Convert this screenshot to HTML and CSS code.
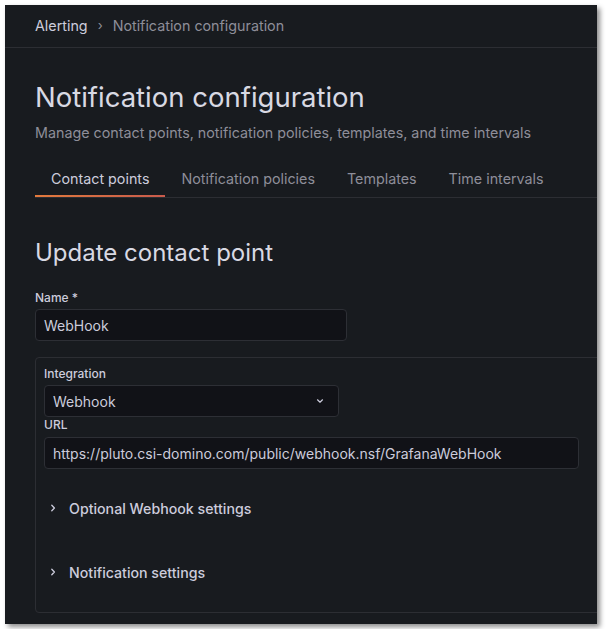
FILE: index.html
```html
<!DOCTYPE html>
<html>
<head>
  <title>Notification configuration</title>
  <meta name="viewport" content="width=device-width, initial-scale=1.0">
  <link rel="stylesheet" href="styles.css">
</head>
<body>

  <div class="app">
    <nav class="crumbs">
      <span class="crumb-root">Alerting</span>
      <span class="crumb-sep">›</span>
      <span class="crumb-current">Notification configuration</span>
    </nav>

    <main class="page">
      <h1 class="title">Notification configuration</h1>
      <p class="subtitle">Manage contact points, notification policies, templates, and time intervals</p>

      <div class="tabs">
        <a class="tab active">Contact points</a>
        <a class="tab">Notification policies</a>
        <a class="tab">Templates</a>
        <a class="tab">Time intervals</a>
      </div>

      <h2 class="section-title">Update contact point</h2>

      <label class="field-label">Name *</label>
      <div class="input name-input">WebHook</div>

      <div class="integration">
        <label class="field-label">Integration</label>
        <div class="input select">
          <span>Webhook</span>
          <svg class="select-arrow" width="12" height="12" viewBox="0 0 12 12"><path d="M3.5 4.8 L6 7.2 L8.5 4.8" fill="none" stroke="#ccccdc" stroke-width="1.2" stroke-linecap="round" stroke-linejoin="round"/></svg>
        </div>
        <label class="field-label url-label">URL</label>
        <div class="input url-input">https://pluto.csi-domino.com/public/webhook.nsf/GrafanaWebHook</div>

        <div class="collapse">
          <svg width="16" height="16" viewBox="0 0 16 16"><path d="M6.8 5.2 L9.4 8 L6.8 10.8" fill="none" stroke="#ccccdc" stroke-width="1.3" stroke-linecap="round" stroke-linejoin="round"/></svg>
          <span>Optional Webhook settings</span>
        </div>
        <div class="collapse">
          <svg width="16" height="16" viewBox="0 0 16 16"><path d="M6.8 5.2 L9.4 8 L6.8 10.8" fill="none" stroke="#ccccdc" stroke-width="1.3" stroke-linecap="round" stroke-linejoin="round"/></svg>
          <span>Notification settings</span>
        </div>
      </div>
    </main>
  </div>

</body>
</html>
```

FILE: styles.css
```css
body { margin: 0; background: #fff; font-family: Inter, "Noto Sans", sans-serif; color: #ccccdc; }

.app {
  margin: 5px;
  width: 592px; height: 619px;
  background: #181b1f;
  overflow: hidden;
  box-shadow: 3px 3px 5px rgba(0, 0, 0, 0.45);
}

.crumbs {
  padding: 0 0 2px 30px;
  box-sizing: border-box;
  height: 43px;
  border-bottom: 1px solid #2c2e33;
  display: flex; align-items: center;
  font-size: 14.3px;
}
.crumb-root { color: #ccccdc; }
.crumb-sep { color: #8e8e99; margin: 0 10px 0 10px; font-size: 13px; }
.crumb-current { color: #8e8e99; }

.page { padding-left: 30px; width: 800px; }

.title {
  margin: 32px 0 0;
  font-size: 27.5px; line-height: 34px; font-weight: 400;
  color: #d8d9e3;
}
.subtitle {
  margin: 9px 0 0;
  font-size: 14.3px; line-height: 20px;
  color: #8e8e99;
}

.tabs {
  margin-top: 16px;
  display: flex;
  border-bottom: 1px solid #2c2e33;
}
.tab {
  position: relative;
  padding: 10px 16px 8px;
  font-size: 14.3px; line-height: 20px;
  color: #8e8e99;
}
.tab.active { color: #ccccdc; }
.tab.active::after {
  content: "";
  position: absolute; left: 0; right: 0; bottom: 0;
  height: 2px;
  background: linear-gradient(90deg, #e27a3d, #c95b4c);
}

.section-title {
  margin: 41px 0 0;
  font-size: 24px; line-height: 28px; font-weight: 400;
  color: #d8d9e3;
}

.field-label {
  display: block;
  font-size: 12px; line-height: 16px; font-weight: 500;
  color: #ccccdc;
}
.section-title + .field-label { margin-top: 23px; }

.input {
  box-sizing: border-box;
  height: 32px;
  margin-top: 4px;
  padding: 0 8px;
  display: flex; align-items: center;
  background: #111217;
  border: 1px solid #2d2f35;
  border-radius: 4px;
  font-size: 14px;
  color: #ccccdc;
}
.name-input { width: 312px; margin-top: 3px; }

.integration {
  margin-top: 16px;
  padding: 8px 8px 24px;
  border: 1px solid #2c2e33;
  border-radius: 4px;
}
.select { width: 295px; justify-content: space-between; margin-top: 3px; }
.select-arrow { margin-right: 4px; }
.url-input { width: 535px; }

.collapse {
  height: 32px;
  margin-top: 23px;
  display: flex; align-items: center;
  font-size: 14.2px; font-weight: 500;
  color: #ccccdc;
}
.collapse svg { margin: 0 8px 0 1px; }
.collapse + .collapse { margin-top: 32px; }
```
